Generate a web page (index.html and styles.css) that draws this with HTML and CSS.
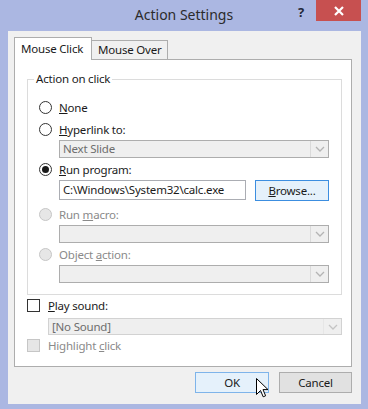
FILE: index.html
```html
<!DOCTYPE html>
<html>
<head>
<meta charset="utf-8">
<link rel="stylesheet" href="styles.css">
</head>
<body>
<div class="window">
  <div class="titlebar">
    <span class="title">Action Settings</span>
    <span class="help">?</span>
    <span class="close"><svg width="12" height="10" viewBox="0 0 12 10"><path d="M2 1 L10 9 M10 1 L2 9" stroke="#fff" stroke-width="2.2" fill="none"/></svg></span>
  </div>
  <div class="client">
    <div class="tabs">
      <div class="tab active">Mouse Click</div>
      <div class="tab">Mouse Over</div>
    </div>
    <div class="panel">
      <fieldset class="group">
        <legend>Action on click</legend>
        <div class="opt first"><span class="radio"></span><span><u>N</u>one</span></div>
        <div class="opt gap6"><span class="radio"></span><span><u>H</u>yperlink to:</span></div>
        <div class="combo sub"><span class="combo-text">Next Slide</span><span class="arrow"><svg width="10" height="6" viewBox="0 0 10 6"><path d="M1 1 L5 5 L9 1" stroke="#b4b4b4" stroke-width="1.3" fill="none"/></svg></span></div>
        <div class="opt gap3"><span class="radio checked"></span><span><u>R</u>un program:</span></div>
        <div class="fieldrow sub">
          <div class="field">C:\Windows\System32\calc.exe</div>
          <div class="btn browse"><u>B</u>rowse...</div>
        </div>
        <div class="opt gap5 disabled"><span class="radio"></span><span>Run <u>m</u>acro:</span></div>
        <div class="combo sub"><span class="combo-text"></span><span class="arrow"><svg width="10" height="6" viewBox="0 0 10 6"><path d="M1 1 L5 5 L9 1" stroke="#b4b4b4" stroke-width="1.3" fill="none"/></svg></span></div>
        <div class="opt gap3 disabled"><span class="radio"></span><span>Object <u>a</u>ction:</span></div>
        <div class="combo sub"><span class="combo-text"></span><span class="arrow"><svg width="10" height="6" viewBox="0 0 10 6"><path d="M1 1 L5 5 L9 1" stroke="#b4b4b4" stroke-width="1.3" fill="none"/></svg></span></div>
      </fieldset>
      <div class="chk-row play"><span class="check"></span><span><u>P</u>lay sound:</span></div>
      <div class="combo sound"><span class="combo-text">[No Sound]</span><span class="arrow"><svg width="10" height="6" viewBox="0 0 10 6"><path d="M1 1 L5 5 L9 1" stroke="#c4c4c4" stroke-width="1.3" fill="none"/></svg></span></div>
      <div class="chk-row highlight disabled"><span class="check"></span><span>Highlight <u>c</u>lick</span></div>
    </div>
    <div class="buttons">
      <div class="btn ok">OK</div>
      <div class="btn cancel">Cancel</div>
    </div>
  </div>
  <svg class="cursor" width="13" height="20" viewBox="0 0 13 20"><path d="M0.5 0.5 L0.5 16.5 L4.5 12.5 L7.2 18.8 L9.6 17.8 L7 11.6 L12 11.6 Z" fill="#fff" stroke="#000" stroke-width="1" stroke-linejoin="round"/></svg>
</div>
</body>
</html>
```

FILE: styles.css
```css
html, body {
  margin: 0;
  padding: 0;
  background: #abb7e2;
}
body {
  font-family: "Segoe UI", "Noto Sans", sans-serif;
  font-size: 11.5px;
  letter-spacing: -0.2px;
  color: #1a1a1a;
}
u {
  text-decoration: underline;
  text-underline-offset: 1px;
}
.window {
  position: relative;
  width: 368px;
  height: 409px;
  box-sizing: border-box;
  background: #abb7e2;
  padding: 0 7px 5px 8px;
  display: flex;
  flex-direction: column;
}
.titlebar {
  height: 31px;
  position: relative;
  flex: none;
}
.title {
  position: absolute;
  left: -8px;
  right: -7px;
  top: 5px;
  text-align: center;
  font-size: 14px;
  letter-spacing: 0;
  color: #2b2b2b;
  line-height: 20px;
}
.help {
  position: absolute;
  left: 290px;
  top: 3px;
  font-weight: bold;
  font-size: 13px;
  color: #23283a;
  line-height: 18px;
}
.close {
  position: absolute;
  left: 308px;
  top: 0;
  width: 45px;
  height: 21px;
  background: #c75050;
  display: flex;
  align-items: center;
  justify-content: center;
}
.client {
  flex: 1;
  background: #f0f0f0;
  padding: 6px 9px 0 6px;
  display: flex;
  flex-direction: column;
}
.tabs {
  display: flex;
  align-items: flex-end;
  height: 22px;
  flex: none;
}
.tab {
  box-sizing: border-box;
  border: 1px solid #adadad;
  border-bottom: none;
  background: #f0f0f0;
  height: 19px;
  line-height: 18px;
  padding: 0 5px 0 6px;
  margin-left: -1px;
  white-space: nowrap;
}
.tab.active {
  position: relative;
  z-index: 1;
  background: #fff;
  height: 23px;
  margin-bottom: -1px;
  margin-left: 0;
  width: 78px;
  line-height: 21px;
}
.panel {
  background: #fff;
  border: 1px solid #adadad;
  height: 308px;
  box-sizing: border-box;
  padding: 11px 9px 0 12px;
  flex: none;
}
.group {
  margin: 0;
  border: 1px solid #dcdcdc;
  padding: 0 0 11px 0;
  min-inline-size: 0;
}
.group legend {
  padding: 0 2px;
  margin-left: 6px;
  line-height: 16px;
}
.opt {
  display: flex;
  align-items: center;
  height: 16px;
  margin-left: 11px;
  gap: 7px;
}
.opt.first { margin-top: 12px; }
.gap6 { margin-top: 6px; }
.gap3 { margin-top: 3px; }
.gap5 { margin-top: 5px; }
.radio {
  width: 13px;
  height: 13px;
  box-sizing: border-box;
  border: 1px solid #333;
  border-radius: 50%;
  background: #fff;
  display: flex;
  align-items: center;
  justify-content: center;
  flex: none;
}
.radio.checked::after {
  content: "";
  width: 7px;
  height: 7px;
  border-radius: 50%;
  background: #1a1a1a;
}
.disabled { color: #8a8a8a; }
.disabled .radio, .disabled .check {
  border-color: #c6c6c6;
  background: #e6e6e6;
}
.sub {
  margin-left: 31px;
  margin-top: 3px;
}
.combo {
  width: 270px;
  height: 18px;
  box-sizing: border-box;
  border: 1px solid #adadad;
  background: #efefef;
  display: flex;
  color: #6d6d6d;
}
.combo-text {
  flex: 1;
  padding-left: 3px;
  line-height: 16px;
}
.arrow {
  width: 17px;
  border-left: 1px solid #dadada;
  display: flex;
  align-items: center;
  justify-content: center;
}
.fieldrow {
  display: flex;
  height: 21px;
}
.field {
  width: 187px;
  height: 20px;
  box-sizing: border-box;
  border: 1px solid #abadb3;
  background: #fff;
  padding-left: 3px;
  line-height: 18px;
}
.btn {
  box-sizing: border-box;
  height: 21px;
  border: 1px solid #adadad;
  background: #e1e1e1;
  text-align: center;
  line-height: 19px;
}
.browse {
  width: 74px;
  margin-left: 9px;
  border-color: #3c8ee0;
  background: #e5f1fb;
}
.chk-row {
  display: flex;
  align-items: center;
  gap: 8px;
  height: 16px;
}
.check {
  width: 13px;
  height: 13px;
  box-sizing: border-box;
  border: 1px solid #333;
  background: #fff;
  flex: none;
}
.play { margin-top: 2px; }
.sound {
  margin-left: 21px;
  margin-top: 5px;
  width: 294px;
  height: 17px;
  border-color: #d2d2d2;
}
.sound .combo-text { line-height: 15px; }
.sound .arrow { border-left-color: #e6e6e6; }
.highlight { margin-top: 2px; }
.buttons {
  display: flex;
  justify-content: flex-end;
  gap: 10px;
  margin-top: 5px;
}
.ok {
  width: 74px;
  border-color: #7eb4ea;
  background: #e5f1fb;
}
.cancel {
  width: 73px;
}
.cursor {
  position: absolute;
  left: 256px;
  top: 378px;
}
```
